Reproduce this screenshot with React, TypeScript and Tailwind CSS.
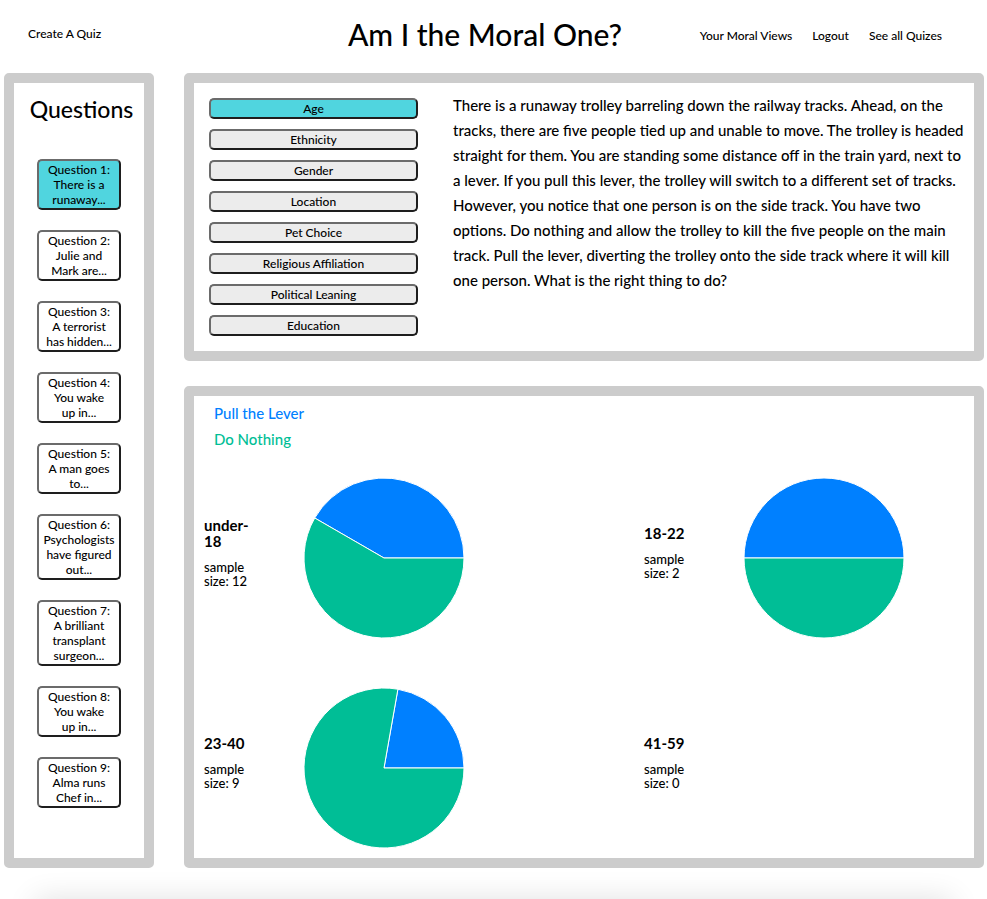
import { Fragment } from "react";

type Group = { label: string; total: number; lever: number };

const BLUE = "#0080ff";
const GREEN = "#00be96";

const questions: string[][] = [
  ["Question 1:", "There is a", "runaway..."],
  ["Question 2:", "Julie and", "Mark are..."],
  ["Question 3:", "A terrorist", "has hidden..."],
  ["Question 4:", "You wake", "up in..."],
  ["Question 5:", "A man goes", "to..."],
  ["Question 6:", "Psychologists", "have figured", "out..."],
  ["Question 7:", "A brilliant", "transplant", "surgeon..."],
  ["Question 8:", "You wake", "up in..."],
  ["Question 9:", "Alma runs", "Chef in..."],
];

const categories = [
  "Age",
  "Ethnicity",
  "Gender",
  "Location",
  "Pet Choice",
  "Religious Affiliation",
  "Political Leaning",
  "Education",
];

const scenario = [
  "There is a runaway trolley barreling down the railway tracks. Ahead, on the",
  "tracks, there are five people tied up and unable to move. The trolley is headed",
  "straight for them. You are standing some distance off in the train yard, next to",
  "a lever. If you pull this lever, the trolley will switch to a different set of tracks.",
  "However, you notice that one person is on the side track. You have two",
  "options. Do nothing and allow the trolley to kill the five people on the main",
  "track. Pull the lever, diverting the trolley onto the side track where it will kill",
  "one person. What is the right thing to do?",
];

const groups: Group[] = [
  { label: "under-18", total: 12, lever: 5 },
  { label: "18-22", total: 2, lever: 1 },
  { label: "23-40", total: 9, lever: 2 },
  { label: "41-59", total: 0, lever: 0 },
];

function Lines({ lines }: { lines: string[] }) {
  return (
    <>
      {lines.map((line, i) => (
        <Fragment key={i}>
          {i > 0 && <br />}
          {line}
        </Fragment>
      ))}
    </>
  );
}

// Angles are in degrees, counter-clockwise from the positive x axis.
function sector(from: number, to: number) {
  const point = (deg: number) => {
    const rad = (deg * Math.PI) / 180;
    return `${80 + 80 * Math.cos(rad)} ${80 - 80 * Math.sin(rad)}`;
  };
  const large = to - from > 180 ? 1 : 0;
  return `M80 80 L${point(from)} A80 80 0 ${large} 0 ${point(to)} Z`;
}

function Pie({ group }: { group: Group }) {
  if (group.total === 0) return null;
  const split = (group.lever / group.total) * 360;
  return (
    <svg viewBox="0 0 160 160" className="size-[160px]" role="img" aria-label={group.label}>
      <path d={sector(0, split)} fill={BLUE} stroke="#fff" />
      <path d={sector(split, 360)} fill={GREEN} stroke="#fff" />
    </svg>
  );
}

const outset =
  "rounded-[5px] border-2 border-t-[#6b6b6b] border-l-[#6b6b6b] border-b-[#1e1e1e] border-r-[#1e1e1e] text-[12px] leading-[15px] cursor-pointer";
const panel = "rounded-[5px] border-10 border-[#ccc] bg-white";

export default function App() {
  return (
    <div className="min-h-screen bg-white font-['Gill_Sans',Lato,sans-serif] font-medium text-black">
      <header className="grid h-[73px] grid-cols-[1fr_auto_1fr] items-center pr-[45px] pb-[2px] pl-7 text-[12px]">
        <nav className="pb-1">
          <a href="#create">Create A Quiz</a>
        </nav>
        <h1 className="pb-1 text-[30px] leading-9 whitespace-nowrap">Am I the Moral One?</h1>
        <nav className="flex justify-end gap-5">
          <a href="#views">Your Moral Views</a>
          <a href="#logout">Logout</a>
          <a href="#quizes">See all Quizes</a>
        </nav>
      </header>

      <div className="flex gap-[30px] pr-[3px] pl-1">
        <aside className={`${panel} w-[150px] shrink-0 pt-3`}>
          <h2 className="pl-[5px] text-center text-[23px] leading-7">Questions</h2>
          <div className="mt-9 flex flex-col items-center gap-5">
            {questions.map((lines, i) => (
              <button
                key={i}
                type="button"
                className={`${outset} w-[84px] py-px whitespace-nowrap ${i === 0 ? "bg-[#50d5df]" : "bg-white"}`}
              >
                <Lines lines={lines} />
              </button>
            ))}
          </div>
        </aside>

        <main className="flex min-w-0 flex-1 flex-col gap-[25px]">
          <section className={`${panel} flex items-start gap-[35px] px-[15px]`}>
            <div className="flex w-[209px] shrink-0 flex-col gap-[10px] py-[15px]">
              {categories.map((name, i) => (
                <button
                  key={name}
                  type="button"
                  className={`${outset} py-px ${i === 0 ? "bg-[#50d5df]" : "bg-[#ececec]"}`}
                >
                  {name}
                </button>
              ))}
            </div>
            <p className="pt-[10px] text-[15px] leading-[25px] whitespace-nowrap">
              <Lines lines={scenario} />
            </p>
          </section>

          <section className={`${panel} px-[10px] pt-1 pb-[10px]`}>
            <div className="px-[10px] text-[15px] leading-[26px]">
              <p className="text-[#0080ff]">Pull the Lever</p>
              <p className="text-[#00be96]">Do Nothing</p>
            </div>
            <div className="mt-[26px] grid grid-cols-[260px_260px] justify-between gap-y-[50px] pr-[60px]">
              {groups.map((group) => (
                <div key={group.label} className="flex h-[160px] items-center justify-between">
                  <div className="w-[50px] pb-3">
                    <h3 className="text-[15px] leading-4 font-bold">{group.label}</h3>
                    <p className="mt-[11px] text-[13px] leading-[14px]">
                      {`sample size: ${group.total}`}
                    </p>
                  </div>
                  <Pie group={group} />
                </div>
              ))}
            </div>
          </section>
        </main>
      </div>

      <footer className="h-[31px] overflow-hidden px-[35px] pt-[31px]">
        <div className="h-10 shadow-[0_0_30px_rgba(0,0,0,0.12)]" />
      </footer>
    </div>
  );
}
